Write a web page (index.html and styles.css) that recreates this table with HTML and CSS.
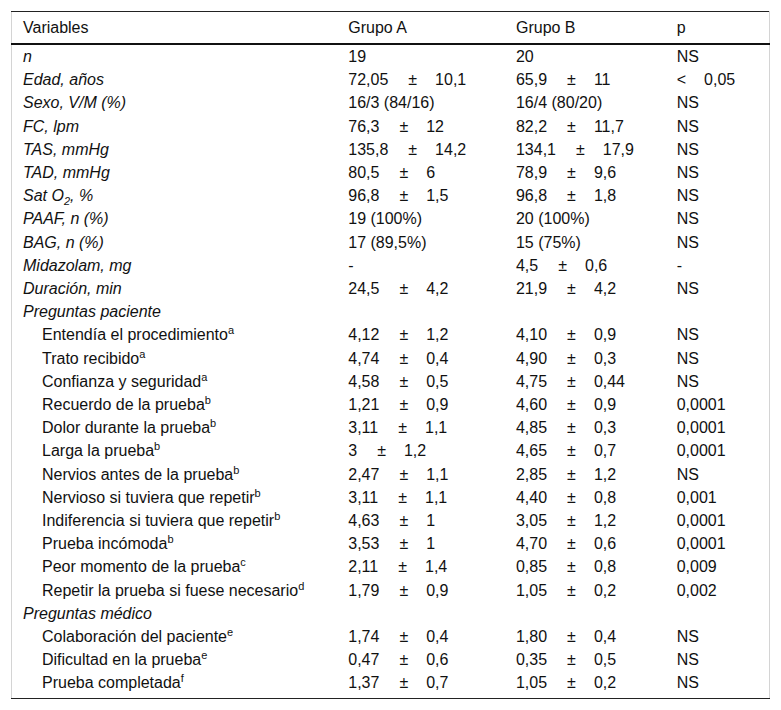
FILE: index.html
```html
<!DOCTYPE html>
<html lang="es">
<head>
<meta charset="utf-8">
<title>Tabla</title>
<link rel="stylesheet" href="styles.css">
</head>
<body>
<div class="wrap">
<table class="tbl">
<colgroup><col class="c1"><col class="c2"><col class="c3"><col class="c4"></colgroup>
<thead>
<tr><th>Variables</th><th>Grupo A</th><th>Grupo B</th><th>p</th></tr>
</thead>
<tbody>
<tr><td class="v">n</td><td>19</td><td>20</td><td>NS</td></tr>
<tr><td class="v">Edad, años</td><td>72,05<span class="pm">±</span>10,1</td><td>65,9<span class="pm">±</span>11</td><td>&lt;<span class="lt"></span>0,05</td></tr>
<tr><td class="v">Sexo, V/M (%)</td><td>16/3 (84/16)</td><td>16/4 (80/20)</td><td>NS</td></tr>
<tr><td class="v">FC, lpm</td><td>76,3<span class="pm">±</span>12</td><td>82,2<span class="pm">±</span>11,7</td><td>NS</td></tr>
<tr><td class="v">TAS, mmHg</td><td>135,8<span class="pm">±</span>14,2</td><td>134,1<span class="pm">±</span>17,9</td><td>NS</td></tr>
<tr><td class="v">TAD, mmHg</td><td>80,5<span class="pm">±</span>6</td><td>78,9<span class="pm">±</span>9,6</td><td>NS</td></tr>
<tr><td class="v">Sat O<sub>2</sub>, %</td><td>96,8<span class="pm">±</span>1,5</td><td>96,8<span class="pm">±</span>1,8</td><td>NS</td></tr>
<tr><td class="v">PAAF, n (%)</td><td>19 (100%)</td><td>20 (100%)</td><td>NS</td></tr>
<tr><td class="v">BAG, n (%)</td><td>17 (89,5%)</td><td>15 (75%)</td><td>NS</td></tr>
<tr><td class="v">Midazolam, mg</td><td>-</td><td>4,5<span class="pm">±</span>0,6</td><td>-</td></tr>
<tr><td class="v">Duración, min</td><td>24,5<span class="pm">±</span>4,2</td><td>21,9<span class="pm">±</span>4,2</td><td>NS</td></tr>
<tr><td class="v">Preguntas paciente</td><td></td><td></td><td></td></tr>
<tr><td class="ind">Entendía el procedimiento<sup>a</sup></td><td>4,12<span class="pm">±</span>1,2</td><td>4,10<span class="pm">±</span>0,9</td><td>NS</td></tr>
<tr><td class="ind">Trato recibido<sup>a</sup></td><td>4,74<span class="pm">±</span>0,4</td><td>4,90<span class="pm">±</span>0,3</td><td>NS</td></tr>
<tr><td class="ind">Confianza y seguridad<sup>a</sup></td><td>4,58<span class="pm">±</span>0,5</td><td>4,75<span class="pm">±</span>0,44</td><td>NS</td></tr>
<tr><td class="ind">Recuerdo de la prueba<sup>b</sup></td><td>1,21<span class="pm">±</span>0,9</td><td>4,60<span class="pm">±</span>0,9</td><td>0,0001</td></tr>
<tr><td class="ind">Dolor durante la prueba<sup>b</sup></td><td>3,11<span class="pm">±</span>1,1</td><td>4,85<span class="pm">±</span>0,3</td><td>0,0001</td></tr>
<tr><td class="ind">Larga la prueba<sup>b</sup></td><td>3<span class="pm">±</span>1,2</td><td>4,65<span class="pm">±</span>0,7</td><td>0,0001</td></tr>
<tr><td class="ind">Nervios antes de la prueba<sup>b</sup></td><td>2,47<span class="pm">±</span>1,1</td><td>2,85<span class="pm">±</span>1,2</td><td>NS</td></tr>
<tr><td class="ind">Nervioso si tuviera que repetir<sup>b</sup></td><td>3,11<span class="pm">±</span>1,1</td><td>4,40<span class="pm">±</span>0,8</td><td>0,001</td></tr>
<tr><td class="ind">Indiferencia si tuviera que repetir<sup>b</sup></td><td>4,63<span class="pm">±</span>1</td><td>3,05<span class="pm">±</span>1,2</td><td>0,0001</td></tr>
<tr><td class="ind">Prueba incómoda<sup>b</sup></td><td>3,53<span class="pm">±</span>1</td><td>4,70<span class="pm">±</span>0,6</td><td>0,0001</td></tr>
<tr><td class="ind">Peor momento de la prueba<sup>c</sup></td><td>2,11<span class="pm">±</span>1,4</td><td>0,85<span class="pm">±</span>0,8</td><td>0,009</td></tr>
<tr><td class="ind">Repetir la prueba si fuese necesario<sup>d</sup></td><td>1,79<span class="pm">±</span>0,9</td><td>1,05<span class="pm">±</span>0,2</td><td>0,002</td></tr>
<tr><td class="v">Preguntas médico</td><td></td><td></td><td></td></tr>
<tr><td class="ind">Colaboración del paciente<sup>e</sup></td><td>1,74<span class="pm">±</span>0,4</td><td>1,80<span class="pm">±</span>0,4</td><td>NS</td></tr>
<tr><td class="ind">Dificultad en la prueba<sup>e</sup></td><td>0,47<span class="pm">±</span>0,6</td><td>0,35<span class="pm">±</span>0,5</td><td>NS</td></tr>
<tr><td class="ind">Prueba completada<sup>f</sup></td><td>1,37<span class="pm">±</span>0,7</td><td>1,05<span class="pm">±</span>0,2</td><td>NS</td></tr>
</tbody>
</table>
</div>
</body>
</html>
```
FILE: styles.css
```css
html, body {
  margin: 0;
  padding: 0;
  background: #fff;
}
.wrap {
  padding: 11px 11px 0 11px;
}
.tbl {
  width: 759px;
  border-collapse: collapse;
  font-family: "Liberation Sans", Arial, sans-serif;
  font-size: 16px;
  color: #111;
  border-top: 1px solid #222;
  border-bottom: 1px solid #222;
  border-left: 1px solid #d4d4d4;
  border-right: 1px solid #d4d4d4;
}
.c1 { width: 326px; }
.c2 { width: 168px; }
.c3 { width: 161px; }
.c4 { width: 104px; }
.tbl th {
  font-weight: normal;
  text-align: left;
  padding: 0 0 0 11px;
  height: 31px;
  line-height: 31px;
  border-bottom: 2px solid #111;
}
.tbl td {
  padding: 0 0 0 11px;
  height: 23.2px;
  line-height: 23.2px;
  white-space: nowrap;
  vertical-align: middle;
}
.tbl tbody tr:last-child td {
  padding-bottom: 3px;
}
.tbl td.v {
  font-style: italic;
}
.tbl td.ind {
  padding-left: 30px;
}
.pm {
  display: inline-block;
  margin: 0 18px 0 20px;
}
.lt {
  display: inline-block;
  width: 18px;
}
sup {
  font-size: 11px;
  line-height: 0;
  vertical-align: 6px;
}
sub {
  font-size: 11px;
  line-height: 0;
  vertical-align: -4px;
}
```
